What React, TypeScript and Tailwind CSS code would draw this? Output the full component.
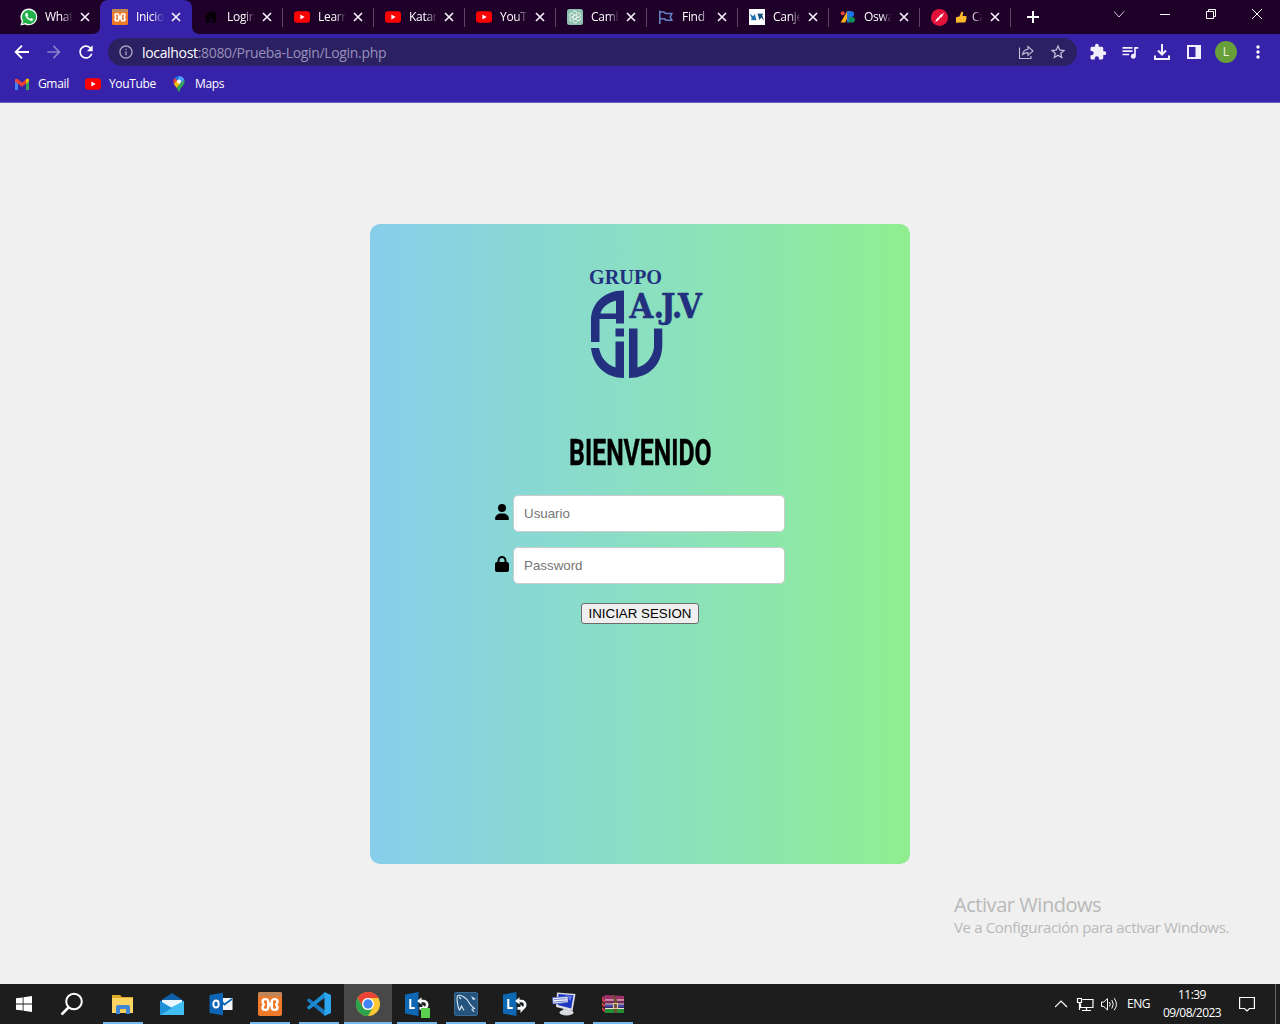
import React from 'react';
import {
  MdArrowForward,
  MdRefresh,
  MdInfoOutline,
  MdStarBorder,
  MdExtension,
  MdQueueMusic,
  MdMoreVert,
} from 'react-icons/md';
import { FaUser, FaLock } from 'react-icons/fa6';

const YouTubeIcon = () => (
  <svg width="16" height="16" viewBox="0 0 16 16">
    <rect x="0" y="2.3" width="16" height="11.4" rx="3" fill="#ff0000" />
    <path d="M6.4 5.6v4.8L10.6 8z" fill="#fff" />
  </svg>
);

const WhatsAppIcon = () => (
  <span className="relative flex h-4 w-4 items-center justify-center">
    <svg width="18" height="18" viewBox="0 0 18 18" className="absolute">
      <path d="M9 .5a8.4 8.4 0 1 1-4 15.9L.4 17.6l1.3-4.4A8.4 8.4 0 0 1 9 .5z" fill="#fff" />
      <path d="M9 1.9a7.1 7.1 0 1 1-3.6 13.2l-3.1.8.9-2.9A7.1 7.1 0 0 1 9 1.9z" fill="#22b04b" />
      <path
        d="M6.3 5c-1.2.6-1.4 2-.5 3.6 1.1 2.1 2.7 3.6 4.7 4.2 1.4.4 2.7-.6 2.6-1.9l-2-1-.9 1.1c-1.3-.5-2.3-1.5-2.9-2.7l.8-.9L7.3 5z"
        fill="#fff"
      />
    </svg>
  </span>
);

const XamppIcon = ({ size }: { size: number }) => (
  <svg width={size} height={size} viewBox="0 0 24 24">
    <rect width="24" height="24" rx="2" fill="#f07a2a" />
    <path d="M0 2Q0 0 2 0h20Q24 0 24 2v2.5H0z" fill="#c08657" />
    <path
      d="M10.200 12.500V9.500c0-3.200-5.700-3.200-5.700 0 0 1.500.8 2.200 1.500 3-.7.8-1.500 1.500-1.500 3 0 3.200 5.700 3.200 5.700 0zM13.800 12.500V9.500c0-3.200 5.700-3.200 5.700 0 0 1.500-.8 2.200-1.500 3 .7.8 1.500 1.500 1.500 3 0 3.200-5.700 3.200-5.700 0z"
      fill="none"
      stroke="#fff"
      strokeWidth="2.400"
      strokeLinejoin="round"
    />
    <path d="M9.500 12.500h5" stroke="#fff" strokeWidth="4" />
  </svg>
);

const HouseIcon = () => (
  <svg width="16" height="16" viewBox="0 0 16 16">
    <path d="M8 1.5 1 8h2v6h3.800v-4h2.400v4H13V8h2l-2.500-2.400V2.500h-1.800v1.400z" fill="#080008" />
  </svg>
);

const ChatIcon = () => (
  <svg width="16" height="16" viewBox="0 0 16 16">
    <rect width="16" height="16" rx="2.5" fill="#8fbfb0" />
    <g fill="none" stroke="#eef8f4" strokeWidth="0.9">
      {[0, 60, 120, 180, 240, 300].map((a) => (
        <path key={a} d="M8 5.9 9.8 7V3.900a2.100 2.100 0 0 0-3.900-.8" transform={`rotate(${a} 8 8)`} />
      ))}
    </g>
  </svg>
);

const FlagIcon = () => (
  <svg width="16" height="16" viewBox="0 0 16 16" fill="none" stroke="#6581c4" strokeWidth="1.6">
    <path d="M1.8 1.500V15M1.800 3H6l1.500 1.500h6.300l-1.500 3.500 1.500 3.200H8L6.500 9.800H1.800" />
  </svg>
);

const ArrowsIcon = () => (
  <svg width="16" height="16" viewBox="0 0 16 16">
    <rect width="16" height="16" fill="#fff" />
    <path d="M.8 4.500 4 7.200 5.800 5l1.700 6.300-5.700-.4 1-1.500z" fill="#1f6fb0" />
    <path d="m15.200 11.500-3-2.700-1.800 2.200-1.900-6.500 5.900.2-1.200 1.700z" fill="#174f7b" />
  </svg>
);

const FontsIcon = () => (
  <svg width="16" height="16" viewBox="0 0 16 16">
    <path d="M7.200 2.300H11L5.200 13.500H.6z" fill="#fbae17" />
    <circle cx="2.700" cy="4.300" r="2" fill="#e8453c" />
    <path d="M8.400 2.300h2.900a2.800 2.800 0 0 1 0 5.600H8.400z" fill="#1a73e8" />
    <path d="M8.400 7.900h3.700a2.800 2.800 0 0 1 0 5.600H8.400z" fill="#0d8f5b" />
    <path d="M7 2.300h1.900v11.200H7z" fill="#2f78dc" />
  </svg>
);

const RedRoundIcon = () => (
  <svg width="17" height="17" viewBox="0 0 16 16">
    <circle cx="8" cy="8" r="8" fill="#e3123b" />
    <path d="m3.800 12.500 2.600-4.600 1.800 1.500zM8 6.600l4.500-3.400-2.800 5z" fill="#fff" />
    <path d="m5 11 5.500-5.800" stroke="#fff" strokeWidth="1.500" />
  </svg>
);

const ThumbIcon = () => (
  <svg width="12" height="13" viewBox="0 0 12 13" className="mr-[5px] shrink-0">
    <path
      d="M1 6.300 4.300 5.500 6.500.8c.9-.5 1.900.2 1.700 1.300L7.500 5h3.300c1 0 1.200 1.400.4 1.800.6.500.5 1.400-.2 1.700.4.600.2 1.300-.4 1.600.2.800-.3 1.400-1 1.400H5.500L1 11.700z"
      fill="#fdb92c"
    />
  </svg>
);

const CloseIcon = () => (
  <svg width="10" height="10" viewBox="0 0 10 10" className="ml-[7px] shrink-0">
    <path d="m1 1 8 8M9 1 1 9" stroke="#f6effa" strokeWidth="1.700" />
  </svg>
);

const tabs: { title: string; icon: React.ReactNode; thumb?: boolean }[] = [
  { title: 'WhatsApp', icon: <WhatsAppIcon /> },
  { title: 'Inicio', icon: <XamppIcon size={16} /> },
  { title: 'Login', icon: <HouseIcon /> },
  { title: 'Learn', icon: <YouTubeIcon /> },
  { title: 'Katana', icon: <YouTubeIcon /> },
  { title: 'YouTube', icon: <YouTubeIcon /> },
  { title: 'Cambiar', icon: <ChatIcon /> },
  { title: 'Find', icon: <FlagIcon /> },
  { title: 'Canje', icon: <ArrowsIcon /> },
  { title: 'Oswald', icon: <FontsIcon /> },
  { title: 'Ca', icon: <RedRoundIcon />, thumb: true },
];

function TabStrip() {
  return (
    <div className="flex h-[34px] bg-[#1e0028] pl-[9px]">
      {tabs.map((t, i) => (
        <div
          key={t.title}
          className={
            'relative flex h-[34px] w-[91px] shrink-0 items-center pl-[12px] ' +
            (i === 1 ? 'rounded-tl-lg bg-[#3723a9]' : '')
          }
        >
          {i === 1 && (
            <svg width="108" height="34" viewBox="0 0 108 34" className="absolute -left-2 bottom-0">
              <path d="M0 34Q8 34 8 26V34zM99 34V0H92Q100 0 100 8V26Q100 34 108 34z" fill="#3723a9" />
              <path d="M91 0h9v8Q100 0 91 0z" fill="#1e0028" />
            </svg>
          )}
          {i > 2 && <span className="absolute top-2 left-0 h-[19px] w-px bg-[#5a4563]" />}
          <span className="relative h-4 w-4 shrink-0">{t.icon}</span>
          <span className="relative ml-2 flex w-[28px] shrink-0 items-center overflow-hidden text-[12px] tracking-[-0.3px] whitespace-nowrap text-white [mask-image:linear-gradient(to_right,black_60%,transparent)]">
            {t.thumb && <ThumbIcon />}
            {t.title}
          </span>
          <CloseIcon />
        </div>
      ))}
      <span className="mt-2 h-[19px] w-px bg-[#5a4563]" />
      <svg width="12" height="12" viewBox="0 0 12 12" className="mt-[11px] ml-[16px]">
        <path d="M6 0v12M0 6h12" stroke="#fff" strokeWidth="2" />
      </svg>
      <svg width="160" height="34" viewBox="0 0 160 34" className="ml-[71px]" fill="none" stroke="#fff">
        <path d="m4 11.500 5 5.500 5-5.500" strokeOpacity=".8" />
        <path d="M50 14.500h10" />
        <path d="M96.500 11.500h7v7h-7zM98.500 11.500v-2h7v7h-2" />
        <path d="m142 9 10 10M152 9l-10 10" />
      </svg>
    </div>
  );
}

function AddressRow() {
  return (
    <div className="flex h-[36px] items-center pl-3 text-white">
      <svg width="20" height="20" viewBox="0 0 20 20" fill="none" stroke="#fff" strokeWidth="1.900">
        <path d="M17 10H4M10 3.700 3.700 10l6.300 6.300" />
      </svg>
      <MdArrowForward className="ml-3 text-[20px] text-[#8a7fcd]" />
      <MdRefresh className="ml-3 text-[20px]" />
      <div className="ml-3 flex h-[28px] w-[969px] items-center rounded-full bg-[#2b2062] pl-[10px]">
        <MdInfoOutline className="text-[16px] text-[#aaa5c4]" />
        <span className="ml-2 w-[260px] text-[14px] tracking-[-0.33px] whitespace-nowrap text-[#9790b9]">
          <span className="text-white">localhost</span>:8080/Prueba-Login/Login.php
        </span>
        <svg width="16" height="16" viewBox="0 0 16 16" className="ml-[616px]" fill="none" stroke="#c2bdd8" strokeWidth="1.100">
          <path d="M1.500 3.500v11h11.500V12" />
          <path d="M4.500 10.500C5 7 7 5.500 10 5.200V2.500L15 7l-5 4.300V8.600c-2.200 0-3.800.4-5.500 1.900z" />
        </svg>
        <MdStarBorder className="ml-[15px] text-[18px] text-[#c9c4df]" />
      </div>
      <MdExtension className="ml-[12px] text-[18px] text-[#f2effc]" />
      <MdQueueMusic className="ml-[13px] text-[20px] text-[#f2effc]" />
      <svg width="18" height="18" viewBox="0 0 18 18" className="ml-[13px]" fill="none" stroke="#f2effc" strokeWidth="2">
        <path d="M9 1v10M5 7.500l4 4 4-4M2 12.500V16h14v-3.500" />
      </svg>
      <svg width="16" height="16" viewBox="0 0 16 16" className="ml-[15px]">
        <path d="M1 1h14v14H1zM3 3v10h6.500V3z" fill="#f2effc" fillRule="evenodd" />
      </svg>
      <span className="ml-[13px] flex h-[22px] w-[22px] items-center justify-center rounded-full bg-[#689f38] text-[12px] text-[#eef5e8]">
        L
      </span>
      <MdMoreVert className="ml-[11px] text-[20px]" />
    </div>
  );
}

function BookmarkRow() {
  return (
    <div className="flex h-7 items-center pl-[14px] text-[12px] tracking-[-0.35px] text-white">
      <svg width="16" height="16" viewBox="0 0 16 16">
        <path d="M1 3.500V14h3V7.500z" fill="#4285f4" />
        <path d="M15 3.500V14h-3V7.500z" fill="#34a853" />
        <path d="M1 3.800Q1.500 2 3.500 3L8 6.500 12.500 3v4.300L8 10.800l-7-5.400z" fill="#ea4335" />
        <path d="m12 3.300 1-.6c1.200-.4 2 .4 2 1.600v1L12 7.700z" fill="#fbbc04" />
      </svg>
      <span className="ml-2 w-[31px]">Gmail</span>
      <span className="ml-4 h-4 w-4">
        <YouTubeIcon />
      </span>
      <span className="ml-2 w-[47px]">YouTube</span>
      <svg width="16" height="16" viewBox="0 0 16 16" className="ml-[15px]">
        <path d="M8 0a5.700 5.700 0 0 0-4.400 2.100L6.400 4.500z" fill="#1a73e8" />
        <path d="M3.600 2.100C2.200 3.900 2 6 3 8l3.400-3.500z" fill="#ea4335" />
        <path d="M8 0c2.600 0 4.600 1.500 5.300 3.700L6.400 11 3 8l3.500-3.800z" fill="#4ba0ff" />
        <path d="m3 8 3-3.500 3.500 2.700L5.500 12z" fill="#fbbc04" />
        <path d="M13.300 3.700c.9 2.600-.2 4.800-2.100 6.700C9.500 12 9 13.500 8.600 15.200c-.2.900-1 .9-1.200 0-.4-1.400-1-2.400-1.900-3.300z" fill="#34a853" />
        <circle cx="8" cy="5.600" r="2" fill="#fff" />
      </svg>
      <span className="ml-2">Maps</span>
    </div>
  );
}

const Logo = () => (
  <svg width="116" height="114" viewBox="588 267 116 114" fill="#22307f" className="ml-[12px]">
    <text x="589" y="283.500" fontFamily="'Liberation Serif', serif" fontSize="20" fontWeight="700" textLength="73" lengthAdjust="spacingAndGlyphs">
      GRUPO
    </text>
    <text
      x="629.500 653.500 661 671.800 678"
      y="317.500"
      fontFamily="'DejaVu Serif Condensed', 'DejaVu Serif', serif"
      fontStretch="condensed"
      fontWeight="700"
      fontSize="34"
      stroke="#22307f"
      strokeWidth="0.500"
    >
      A.J.V
    </text>
    <path
      fillRule="evenodd"
      d="M624 290.500v33h-8v-4.500h-16.500v23H591v-21c0-17 12-30.500 33-30.500zM616 300.500c-8 2-14 7-15.600 13H616z"
    />
    <path d="M615.500 328.500h8.500v8h-8.500zM615.500 341.500h8.500v36.500c-18 0-31-12-33-30h8c2 10 8 17 16.500 19.500z" />
    <path d="M629 328.500h8.500v39c9-2.500 15-10 16.500-20v-19h8.300v16c0 20-13 33.500-33.300 33.500z" />
  </svg>
);

function LoginCard() {
  return (
    <div className="flex h-[640px] w-[540px] flex-col items-center rounded-[10px] bg-linear-to-r from-[#87ceeb] to-[#90ee90] pt-[43px]">
      <Logo />
      <h1 className="mt-[45px] h-[54px] origin-center scale-x-[0.67] text-[37px] leading-[54px] font-bold whitespace-nowrap text-black font-['Roboto',sans-serif] [-webkit-text-stroke:0.4px_black]">
        BIENVENIDO
      </h1>
      <div className="mt-[15px] flex flex-col gap-[15px] font-['Liberation_Sans',sans-serif]">
        <div className="flex h-[37px] items-center">
          <FaUser className="mr-[4px] mb-[3px] h-4 w-[14px] text-black" />
          <input
            className="h-[37px] w-[272px] rounded-[5px] border border-[#ccc] bg-white px-[10px] text-[13.333px] placeholder:text-[#757575]"
            placeholder="Usuario"
          />
        </div>
        <div className="flex h-[37px] items-center">
          <FaLock className="mr-[4px] mb-[3px] h-4 w-[14px] text-black" />
          <input
            type="password"
            className="h-[37px] w-[272px] rounded-[5px] border border-[#ccc] bg-white px-[10px] text-[13.333px] placeholder:text-[#757575]"
            placeholder="Password"
          />
        </div>
      </div>
      <button className="mt-[19px] h-[21px] w-[118px] rounded-[3px] border border-[#6b6b6b] bg-[#efefef] text-[13.333px] leading-[19px] whitespace-nowrap text-black font-['Liberation_Sans',sans-serif]">
        INICIAR SESION
      </button>
    </div>
  );
}

const ExplorerIcon = () => (
  <svg width="24" height="24" viewBox="0 0 24 24">
    <path d="M1 3h8l2 2h11v4H1z" fill="#e0a92a" />
    <path d="M1 6h21v15H1z" fill="#fcd462" />
    <path d="M5 22v-7q0-2 2-2h10q2 0 2 2v7h-4v-5H9v5z" fill="#3f87d6" />
    <path d="M9 17h6v2H9z" fill="#f4c64a" />
  </svg>
);

const MailIcon = () => (
  <svg width="26" height="24" viewBox="0 0 26 24">
    <path d="M1 9 13 1l12 8v3H1z" fill="#0f5fa8" />
    <path d="M3 8h20v8H3z" fill="#eaf6fd" />
    <path d="M1 9v14h24V9l-12 8z" fill="#27a3e6" />
    <path d="m1 23 12-8L25 9v14z" fill="#42bdf2" />
    <path d="M1 9v14l12-7z" fill="#1f90d8" />
  </svg>
);

const OutlookIcon = () => (
  <svg width="24" height="24" viewBox="0 0 24 24">
    <path d="M12 6h11.500v12H12z" fill="#f3f7fb" />
    <path d="m12 9 3.500 3.500L23 7" fill="none" stroke="#1068b8" strokeWidth="1.800" />
    <path d="M.5 3 14 .8v22.400L.5 21z" fill="#0c66b5" />
    <ellipse cx="7" cy="12" rx="2.700" ry="3.500" fill="none" stroke="#fff" strokeWidth="1.900" />
  </svg>
);

const CodeIcon = () => (
  <svg width="26" height="26" viewBox="0 0 26 26">
    <path d="m1 9 2-1.700L19 19.500V25L1.200 10z" fill="#1779c0" />
    <path d="m1 17 2 1.700L19 6.500V1L1.200 16z" fill="#1b8bd2" />
    <path d="m18.500 1 6.500 3v18l-6.500 3z" fill="#2ba5ee" />
  </svg>
);

const ChromeIcon = () => (
  <svg width="24" height="24" viewBox="0 0 24 24">
    <circle cx="12" cy="12" r="12" fill="#fcc934" />
    <path d="M1.600 6A12 12 0 0 1 22.400 6H12a6 6 0 0 0-5.200 9z" fill="#ea4335" />
    <path d="M1.600 6A12 12 0 0 0 12 24l5.200-9a6 6 0 0 1-10.400 0z" fill="#2ba24c" />
    <circle cx="12" cy="12" r="6" fill="#fff" />
    <circle cx="12" cy="12" r="4.700" fill="#4285f4" />
  </svg>
);

const LyncIcon = ({ status }: { status?: boolean }) => (
  <svg width="26" height="28" viewBox="0 0 26 28">
    <path d="M1 4.500 14.500 2v24L1 23.500z" fill="#0f68b4" />
    <path d="M6.300 9v9h4.500" fill="none" stroke="#fff" strokeWidth="2" />
    <path
      d="M14.500 11h5a3.700 3.700 0 0 1 0 7.400h-4"
      fill="none"
      stroke="#f5f9fc"
      strokeWidth="2.600"
    />
    <path d="M17.500 7.200v7.400L13.200 11zM18.500 14.500l4 4-4 4.500z" fill="#f5f9fc" />
    {status && <path d="M17 18h9v10h-9z" fill="#5bd04f" />}
  </svg>
);

const WorkbenchIcon = () => (
  <svg width="24" height="24" viewBox="0 0 24 24">
    <rect x=".5" y=".5" width="23" height="23" rx="1.500" fill="#24537d" stroke="#386a94" />
    <path
      d="M5.500 18.500C3.500 14 2 5 4 3.500c3-1 9 2.500 11 7 1.500 3.500 3.500 4 5.500 6l-2.500.7 2 2.800M5.500 18.500l2-4.500 2.500 4.500M5 5l2 2"
      fill="none"
      stroke="#dbe6ee"
      strokeWidth="1.100"
    />
    <path d="m17 4 5 3-3 1z" fill="#d9e6ef" />
  </svg>
);

const ComputerIcon = () => (
  <svg width="24" height="24" viewBox="0 0 24 24">
    <path d="M11 15h6v5h-6z" fill="#a9adb1" />
    <ellipse cx="14.500" cy="20.500" rx="7" ry="3" fill="#d9dbdd" />
    <path d="m5 .5 18.500 1.500-3 17L4 15z" fill="#dcdee2" />
    <path d="m6.500 2 15 1.300-2.300 13.200L6 13z" fill="#1e35c4" />
    <path d="m13 3 7 1-1.500 5z" fill="#5f7bea" />
    <path d="M.5 5.500 16 4.500v6L1 12z" fill="#f4f4fb" stroke="#3652b8" strokeWidth=".8" />
    <path d="m2 7.500 12.500-.8M2 10l12.500-1" stroke="#6c80cf" strokeWidth="1" />
  </svg>
);

const RarIcon = () => (
  <svg width="24" height="24" viewBox="0 0 24 24">
    <path d="m1 5 4-2 18 1v4H4z" fill="#a0306a" />
    <path d="m1 5 3 3v3l-3-2zM1 10l3 2.500v3L1 13.500zM1 15l3 2.500v3L1 18z" fill="#c93f4f" />
    <path d="M4 8h19v3.500H4z" fill="#7f2560" />
    <path d="M4 12.500h19v3H4z" fill="#4a43ad" />
    <path d="M4 17h19v4H4z" fill="#248d35" />
    <path d="M4 8h19M4 12h19M4 16.500h19" stroke="#f0e6d9" strokeWidth="1.100" />
    <path d="m10 3 3 5v13h3V8l-3-5z" fill="#6f4a38" />
    <path d="M12.500 11.500h4v5h-4z" fill="none" stroke="#d8c9a0" strokeWidth="1.200" />
  </svg>
);

const apps: { icon: React.ReactNode; open?: boolean; active?: boolean }[] = [
  { icon: <ExplorerIcon />, open: true },
  { icon: <MailIcon /> },
  { icon: <OutlookIcon /> },
  { icon: <XamppIcon size={24} />, open: true },
  { icon: <CodeIcon />, open: true },
  { icon: <ChromeIcon />, open: true, active: true },
  { icon: <LyncIcon status />, open: true },
  { icon: <WorkbenchIcon />, open: true },
  { icon: <LyncIcon />, open: true },
  { icon: <ComputerIcon />, open: true },
  { icon: <RarIcon />, open: true },
];

function Taskbar() {
  return (
    <div className="flex h-10 bg-[#1d1d1d] text-[12px] text-white">
      <div className="flex w-12 items-center justify-center">
        <svg width="16" height="16" viewBox="0 0 16 16" fill="#fff">
          <path d="M0 2.300 6.700 1.400v6.200H0zM7.500 1.200 16 0v7.600H7.500zM0 8.400h6.700v6.200L0 13.700zM7.500 8.400H16V16l-8.500-1.200z" />
        </svg>
      </div>
      <div className="flex w-[51px] items-center pl-3">
        <svg width="24" height="24" viewBox="0 0 24 24" fill="none" stroke="#fff" strokeWidth="2">
          <circle cx="14" cy="9.500" r="7.800" />
          <path d="m8.500 15.500-7 7" strokeWidth="2.500" />
        </svg>
      </div>
      <div className="flex gap-px">
        {apps.map((a, i) => (
          <div
            key={i}
            className={'flex h-10 w-12 flex-col items-center ' + (a.active ? 'bg-[#484848]' : '')}
          >
            <div className="flex h-[38px] items-center pt-[2px]">{a.icon}</div>
            {a.open && <div className={'h-[2px] bg-[#76b9ed] ' + (a.active ? 'w-12' : 'w-10')} />}
          </div>
        ))}
      </div>
      <div className="ml-auto flex items-center">
        <svg width="66" height="20" viewBox="0 0 66 20" fill="none" stroke="#fff" strokeWidth="1.200">
          <path d="m0 13 6-6 6 6" />
          <path d="M27.500 5.500H38v8H25.500v-4M22.500 4.500h4v4h-4zM24.500 8.500v7.500M31.500 13.500v3M27 16.500h9" />
          <path d="M46.500 8v4.500h2.300l3.700 3.500V4.500L48.800 8zM54.500 8q1.500 2.200 0 4.500M56.800 6q3 4.200 0 8.500M59.200 4.200q4.500 6 0 12" strokeWidth="1" />
        </svg>
        <span className="ml-[6px] w-[24px] text-[12px] tracking-[-0.5px]">ENG</span>
        <div className="ml-[11px] flex w-[60px] flex-col items-center text-[12px] leading-[18px] tracking-[-0.55px] whitespace-nowrap">
          <span>11:39</span>
          <span>09/08/2023</span>
        </div>
        <svg width="16" height="18" viewBox="0 0 16 18" className="ml-[17px]" fill="none" stroke="#fff" strokeWidth="1.200">
          <path d="M.6 2.500h14.800v11H10.500L8 16l-2.500-2.500H.6z" />
        </svg>
        <div className="ml-[20px] h-10 w-px bg-[#666]" />
        <div className="w-1" />
      </div>
    </div>
  );
}

export default function App() {
  return (
    <div className="flex h-[1024px] w-[1280px] flex-col overflow-hidden bg-[#f0f0f0] font-['Open_Sans','Noto_Sans',sans-serif]">
      <TabStrip />
      <div className="h-[69px] border-b border-[#6a5cc0] bg-[#3723a9]">
        <AddressRow />
        <BookmarkRow />
      </div>
      <div className="relative flex flex-1 items-center justify-center">
        <LoginCard />
        <div className="absolute top-[788px] left-[954px] whitespace-nowrap text-[#b9b9b9]">
          <div className="text-[20px] leading-[27px] tracking-[-0.45px]">Activar Windows</div>
          <div className="text-[15px] leading-[19px] tracking-[-0.35px]">Ve a Configuración para activar Windows.</div>
        </div>
      </div>
      <Taskbar />
    </div>
  );
}
